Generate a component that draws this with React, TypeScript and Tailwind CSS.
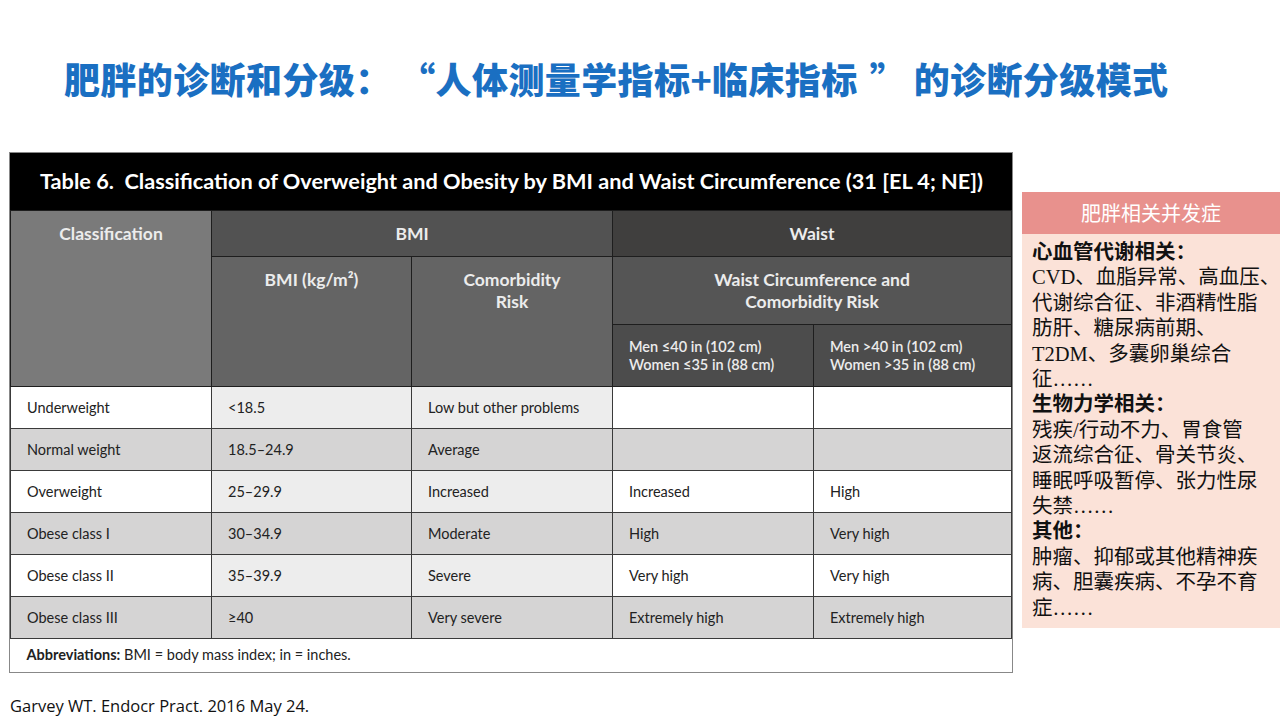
import React from "react";

const rows = [
  { c: "Underweight", bmi: "<18.5", risk: "Low but other problems", w1: "", w2: "" },
  { c: "Normal weight", bmi: "18.5–24.9", risk: "Average", w1: "", w2: "" },
  { c: "Overweight", bmi: "25–29.9", risk: "Increased", w1: "Increased", w2: "High" },
  { c: "Obese class I", bmi: "30–34.9", risk: "Moderate", w1: "High", w2: "Very high" },
  { c: "Obese class II", bmi: "35–39.9", risk: "Severe", w1: "Very high", w2: "Very high" },
  { c: "Obese class III", bmi: "≥40", risk: "Very severe", w1: "Extremely high", w2: "Extremely high" },
];

const sideLines: { text: string; bold?: boolean }[] = [
  { text: "心血管代谢相关：", bold: true },
  { text: "CVD、血脂异常、高血压、" },
  { text: "代谢综合征、非酒精性脂" },
  { text: "肪肝、糖尿病前期、" },
  { text: "T2DM、多囊卵巢综合" },
  { text: "征……" },
  { text: "生物力学相关：", bold: true },
  { text: "残疾/行动不力、胃食管" },
  { text: "返流综合征、骨关节炎、" },
  { text: "睡眠呼吸暂停、张力性尿" },
  { text: "失禁……" },
  { text: "其他：", bold: true },
  { text: "肿瘤、抑郁或其他精神疾" },
  { text: "病、胆囊疾病、不孕不育" },
  { text: "症……" },
];

export default function App() {
  return (
    <div className="relative w-[1280px] h-[720px] bg-white overflow-hidden">
      <h1
        className="pl-[64px] pt-[56px] text-[36px] leading-[44px] font-black text-[#1a6fc2] tracking-[0.4px] whitespace-nowrap [text-spacing-trim:space-all]"
        style={{ fontFamily: '"Noto Sans CJK SC", sans-serif' }}
      >
        肥胖的诊断和分级：<span className="inline-block w-[44px] text-right">“</span>人体测量学指标
        <span className="font-bold">+</span>临床指标
        <span className="inline-block w-[56px] text-left pl-[12px]">”</span>的诊断分级模式
      </h1>

      <div className="flex mt-[52px]">
        <div className="ml-[9px] w-[1004px]" style={{ fontFamily: "Lato, sans-serif" }}>
          <BmiTable />
        </div>
        <SidePanel />
      </div>

      <div
        className="absolute left-[10px] top-[694px] text-[16.5px] text-[#111]"
        style={{ fontFamily: '"Open Sans", sans-serif' }}
      >
        Garvey WT. Endocr Pract. 2016 May 24.
      </div>
    </div>
  );
}

function BmiTable() {
  const th = "border border-[#1e1e1e] text-[#ececec] font-bold text-[17.5px] leading-[22px]";
  const men = "border border-[#1e1e1e] bg-[#4c4c4c] text-[#ececec] font-semibold text-left pl-[16px] text-[14.5px] leading-[18px]";
  const td = "border border-[#3a3a3a] pl-[16px] text-[14.5px] text-[#222] h-[42px]";
  return (
    <div className="border border-[#888]">
      <div className="bg-black h-[57px] flex items-center pl-[30px] text-white text-[21.7px] font-bold whitespace-nowrap">
        Table 6.&nbsp; Classification of Overweight and Obesity by BMI and Waist Circumference (31 [EL 4; NE])
      </div>
      <table className="w-full border-collapse table-fixed">
        <colgroup>
          <col className="w-[201px]" />
          <col className="w-[200px]" />
          <col className="w-[201px]" />
          <col className="w-[201px]" />
          <col />
        </colgroup>
        <thead>
          <tr className="h-[46px]">
            <th rowSpan={3} className={`${th} bg-[#7a7a7a] align-top pt-[12px]`}>
              Classification
            </th>
            <th colSpan={2} className={`${th} bg-[#525252]`}>BMI</th>
            <th colSpan={2} className={`${th} bg-[#403f3e]`}>Waist</th>
          </tr>
          <tr className="h-[68px]">
            <th rowSpan={2} className={`${th} bg-[#646464] align-top pt-[12px]`}>
              BMI (kg/m²)
            </th>
            <th rowSpan={2} className={`${th} bg-[#646464] align-top pt-[12px]`}>
              Comorbidity
              <br />
              Risk
            </th>
            <th colSpan={2} className={`${th} bg-[#555555]`}>
              Waist Circumference and
              <br />
              Comorbidity Risk
            </th>
          </tr>
          <tr className="h-[62px]">
            <th className={men}>
              Men ≤40 in (102 cm)
              <br />
              Women ≤35 in (88 cm)
            </th>
            <th className={men}>
              Men &gt;40 in (102 cm)
              <br />
              Women &gt;35 in (88 cm)
            </th>
          </tr>
        </thead>
        <tbody>
          {rows.map((r, i) => {
            const even = i % 2 === 1;
            return (
              <tr key={r.c}>
                <td className={`${td} ${even ? "bg-[#d5d4d4]" : "bg-white"}`}>{r.c}</td>
                <td className={`${td} ${even ? "bg-[#d5d4d4]" : "bg-[#ededed]"}`}>{r.bmi}</td>
                <td className={`${td} ${even ? "bg-[#d5d4d4]" : "bg-[#ededed]"}`}>{r.risk}</td>
                <td className={`${td} ${even ? "bg-[#d5d4d4]" : "bg-white"}`}>{r.w1}</td>
                <td className={`${td} ${even ? "bg-[#d5d4d4]" : "bg-white"}`}>{r.w2}</td>
              </tr>
            );
          })}
          <tr>
            <td colSpan={5} className="border-t border-[#3a3a3a] pl-[16px] h-[33px] text-[14.5px] text-[#222] bg-white">
              <span className="font-bold">Abbreviations:</span> BMI = body mass index; in = inches.
            </td>
          </tr>
        </tbody>
      </table>
    </div>
  );
}

function SidePanel() {
  return (
    <div className="ml-[9px] mt-[40px] w-[258px] h-[436px] bg-[#fbe2d8] flex flex-col">
      <div
        className="h-[42px] bg-[#e8918d] flex items-center justify-center text-white text-[20px]"
        style={{ fontFamily: '"Noto Sans CJK SC", sans-serif' }}
      >
        肥胖相关并发症
      </div>
      <div
        className="pl-[10px] pt-[6px] text-[20.5px] leading-[25.4px] text-[#111] whitespace-nowrap"
        style={{ fontFamily: '"Liberation Serif", "Noto Sans CJK SC", serif' }}
      >
        {sideLines.map((l, i) => (
          <div key={i} className={l.bold ? "font-bold" : "font-normal"}>
            {l.text}
          </div>
        ))}
      </div>
    </div>
  );
}
